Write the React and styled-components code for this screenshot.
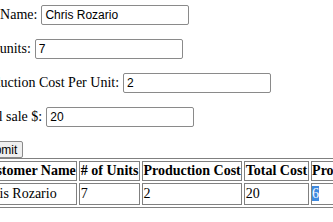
import styled, { createGlobalStyle } from "styled-components";

const GlobalStyle = createGlobalStyle`
  html, body {
    margin: 0;
    overflow: hidden;
    background: #fff;
  }
  body {
    font-family: "Liberation Serif", "Times New Roman", serif;
    font-size: 14px;
    color: #000;
  }
`;

// the page is seen scrolled a little to the right
const Page = styled.div`
  margin-left: -26px;
  padding-top: 5px;
  width: 600px;
`;

const Form = styled.form`
  display: flex;
  flex-direction: column;
  align-items: flex-start;
  gap: 14px;
`;

const Field = styled.label`
  display: flex;
  align-items: center;
  gap: 4px;
  height: 20px;
  white-space: nowrap;
`;

const Input = styled.input`
  box-sizing: border-box;
  width: 148px;
  height: 20px;
  padding: 1px 3px;
  border: 1px solid #8a8a8a;
  border-radius: 2px;
  font-family: "Liberation Sans", Arial, sans-serif;
  font-size: 12px;
  color: #000;
  background: #fff;
`;

const Button = styled.button`
  height: 17px;
  padding: 0 5px;
  border: 1px solid #8a8a8a;
  border-radius: 2px;
  background: #efefef;
  font-family: "Liberation Sans", Arial, sans-serif;
  font-size: 12px;
  color: #000;
  line-height: 1;
`;

const Table = styled.table`
  margin-top: 0;
  border: 1px solid #808080;
  border-spacing: 2px;
  white-space: nowrap;
`;

const Th = styled.th`
  border: 1px solid #808080;
  padding: 1px 0.5px;
  font-weight: bold;
  text-align: left;
`;

const Td = styled.td`
  border: 1px solid #808080;
  padding: 2px 0.5px;
  text-align: left;
`;

const Selected = styled.span`
  background: #3f8ae0;
  color: #fff;
`;

const fields = [
  { label: "Full Name:", value: "Chris Rozario" },
  { label: "# of units:", value: "7" },
  { label: "Production Cost Per Unit:", value: "2" },
  { label: "Total sale $:", value: "20" },
];

export default function App() {
  return (
    <>
      <GlobalStyle />
      <Page>
        <Form onSubmit={(e) => e.preventDefault()}>
          {fields.map((f) => (
            <Field key={f.label}>
              {f.label}
              <Input type="text" defaultValue={f.value} />
            </Field>
          ))}
          <Button type="submit">Submit</Button>
        </Form>
        <Table>
          <thead>
            <tr>
              <Th>Customer Name</Th>
              <Th># of Units</Th>
              <Th>Production Cost</Th>
              <Th>Total Cost</Th>
              <Th>Profit</Th>
            </tr>
          </thead>
          <tbody>
            <tr>
              <Td>Chris Rozario</Td>
              <Td>7</Td>
              <Td>2</Td>
              <Td>20</Td>
              <Td>
                <Selected>6</Selected>
              </Td>
            </tr>
          </tbody>
        </Table>
      </Page>
    </>
  );
}
